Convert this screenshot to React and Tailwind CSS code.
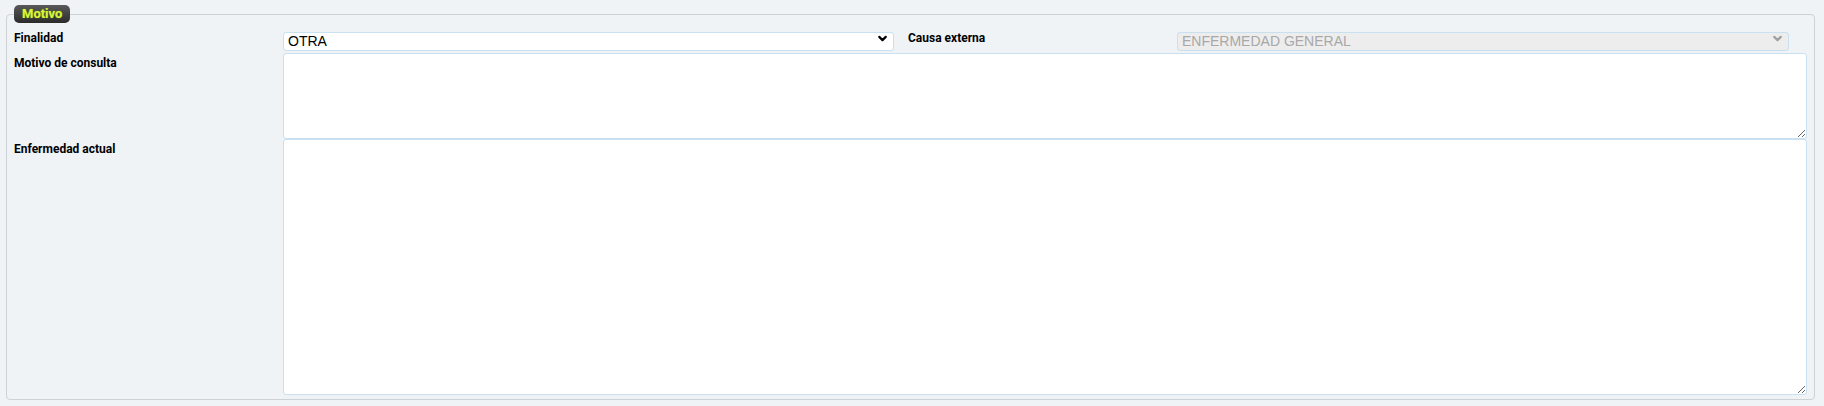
import { ChevronDown } from "lucide-react";

const labelCls = "text-[12px] font-bold text-black leading-[14px]";

function Select({ value, disabled, width }) {
  return (
    <div className={`relative ${width}`}>
      <select
        disabled={disabled}
        defaultValue={value}
        className={`appearance-none w-full h-[19px] pl-[4px] pr-[20px] text-[14px] leading-[17px] rounded-[3px] border border-[#c8e0ef] outline-none ${
          disabled ? "bg-[#ededed] text-[#a8a8a8]" : "bg-white text-black"
        }`}
        style={{ fontFamily: "'Liberation Sans', Arial, sans-serif" }}
      >
        <option value={value}>{value}</option>
      </select>
      <ChevronDown
        size={13}
        strokeWidth={4}
        className={`absolute right-[5px] top-[3px] pointer-events-none ${
          disabled ? "text-[#a0a0a0]" : "text-black"
        }`}
      />
    </div>
  );
}

function Area({ height }) {
  return (
    <textarea
      className={`block w-[1524px] ${height} bg-white rounded-[3px] border border-[#c8e0ef] outline-none p-[2px] text-[13px]`}
    />
  );
}

export default function App() {
  return (
    <div
      className="w-[1824px] h-[406px] bg-[#eff3f6] pt-[5px] pl-[6px] overflow-hidden"
      style={{ fontFamily: "Roboto, 'Liberation Sans', Arial, sans-serif" }}
    >
      <fieldset className="w-[1804px] h-[395px] border border-[#cdd2d6] rounded-[4px] px-[7px] pb-[5px]">
        <legend className="px-[8px] h-[18px] rounded-[5px] bg-gradient-to-b from-[#5a5a5a] to-[#2b2b2b] text-[13px] font-bold leading-[18px] text-[#d6f53c] [text-shadow:0_0_1px_#9bb600]">
          Motivo
        </legend>

        <div className="mt-[6px] flex items-start">
          <div className={`w-[269px] pt-[2px] ${labelCls}`}>Finalidad</div>
          <Select value="OTRA" width="w-[611px]" />
          <div className={`w-[283px] pl-[14px] pt-[2px] ${labelCls}`}>Causa externa</div>
          <Select value="ENFERMEDAD GENERAL" disabled width="w-[612px]" />
        </div>

        <div className="flex items-start">
          <div className={`w-[269px] pt-[3px] ${labelCls}`}>Motivo de consulta</div>
          <Area height="h-[86px]" />
        </div>

        <div className="flex items-start">
          <div className={`w-[269px] pt-[3px] ${labelCls}`}>Enfermedad actual</div>
          <Area height="h-[256px]" />
        </div>
      </fieldset>
    </div>
  );
}
